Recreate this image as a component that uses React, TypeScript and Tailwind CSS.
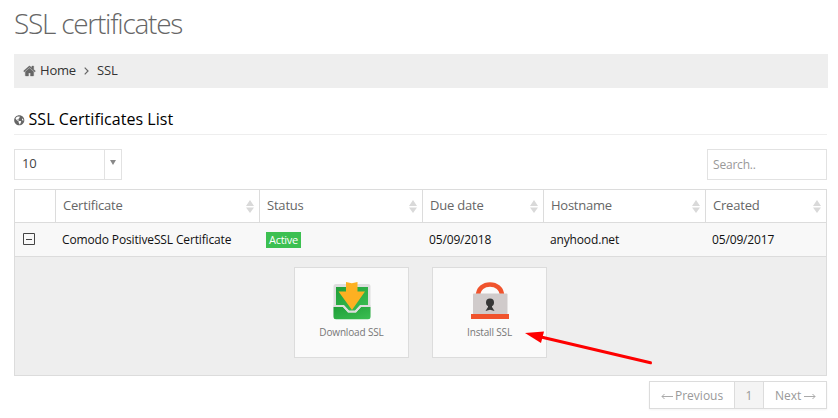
import React from "react";
import { FaGlobeAmericas } from "react-icons/fa";

const HomeIcon = () => (
  <svg className="h-[14px] w-[13px] shrink-0" viewBox="0 0 1792 1792" fill="#666" stroke="#666" strokeWidth="40" preserveAspectRatio="none">
    <path d="M1472 992v480q0 26-19 45t-45 19h-384v-384h-256v384h-384q-26 0-45-19t-19-45v-480q0-1 .5-3t.5-3l575-474 575 474q1 2 1 6zm223-69l-62 74q-8 9-21 11h-3q-13 0-21-7l-692-577-692 577q-12 8-24 7-13-2-21-11l-62-74q-8-10-7-23.5t11-21.5l719-599q32-26 76-26t76 26l244 204v-195q0-14 9-23t23-9h192q14 0 23 9t9 23v408l219 182q10 8 11 21.5t-7 23.5z" />
  </svg>
);

const SortIcon = () => (
  <svg className="mt-px h-[13px] w-[8px] shrink-0" viewBox="0 0 8 13" fill="#d9d9d9">
    <path d="M4 0L8 6H0zM0 7.500H8L4 13z" />
  </svg>
);

const DownloadIcon = () => (
  <svg className="h-[39px] w-[38px]" viewBox="0 0 38 39">
    <defs>
      <linearGradient id="tray" x1="0" y1="0" x2="1" y2="1">
        <stop offset="0" stopColor="#1f9f38" />
        <stop offset="1" stopColor="#3cbf53" />
      </linearGradient>
    </defs>
    <rect x="0.500" y="2" width="37" height="34" rx="2.500" fill="#dedede" />
    <path d="M3 5h32v18h-7.500l-5.500 6h-6l-5.500-6H3z" fill="url(#tray)" />
    <path d="M0.500 25H10l5 5.500h8l5-5.500h9.500v9.800a2.500 2.500 0 0 1-2.500 2.500H3a2.500 2.500 0 0 1-2.500-2.500z" fill="url(#tray)" />
    <path d="M0.500 24H10.500l5 5.500h7l5-5.500h10" fill="none" stroke="#dedede" strokeWidth="2" />
    <path d="M13 0l5.800 1.200L24.500 0v9.500H32L19 28 5.500 9.500H13z" fill="#fdb022" />
  </svg>
);

const LockIcon = () => (
  <svg className="h-[39px] w-[38px]" viewBox="0 0 38 39">
    <path d="M7 14C7 -1.500 31 -1.500 31 14" fill="none" stroke="#f0532d" strokeWidth="4.500" />
    <rect x="2" y="11.500" width="34.500" height="21" rx="1" fill="#d0cbcb" />
    <rect y="32" width="38" height="5" fill="#f0532d" />
    <circle cx="19" cy="20.500" r="4" fill="#373737" />
    <path d="M17 22h4v3l2.500 4-4.500-1.200-4.500 1.200L17 25z" fill="#373737" />
  </svg>
);

const columns = [
  { label: "Certificate", width: "w-[204px]", spacing: "tracking-[-0.2px]" },
  { label: "Status", width: "w-[163px]", spacing: "tracking-[-0.2px]" },
  { label: "Due date", width: "w-[121px]", spacing: "tracking-[-0.2px]" },
  { label: "Hostname", width: "w-[162px]", spacing: "tracking-[-0.25px]" },
  { label: "Created", width: "w-[121px]", spacing: "tracking-[-0.2px]" },
];

function Tile({ label, children }: { label: string; children: React.ReactNode }) {
  return (
    <button className="flex h-[91px] w-[115px] flex-col items-center border border-[#dcdcdc] bg-[#fafafa] pt-[14px]">
      {children}
      <span className="mt-[4px] text-[10px] leading-[14px] tracking-[-0.15px] whitespace-nowrap text-[#777]">{label}</span>
    </button>
  );
}

const ArrowLeft = () => (
  <svg className="mt-[2px] h-[7px] w-[12px]" viewBox="0 0 12 7" fill="none" stroke="#aaa"><path d="M12 3.500H1M3.500 1L1 3.500 3.500 6" /></svg>
);

const ArrowRight = () => (
  <svg className="mt-[2px] h-[7px] w-[12px]" viewBox="0 0 12 7" fill="none" stroke="#aaa"><path d="M0 3.500H11M8.500 1L11 3.500 8.500 6" /></svg>
);

export default function App() {
  return (
    <div className="relative h-[418px] w-[838px] overflow-hidden bg-white pl-[14px] font-['Open_Sans',sans-serif] text-[13px] text-[#333]">
      <h1 className="h-[54px] pt-[4px] text-[28px] leading-[38px] font-light tracking-[-1.250px] text-[#666]">SSL certificates</h1>
      <nav className="flex h-[34px] w-[814px] items-center bg-[#eee] pl-[9px]">
        <HomeIcon />
        <span className="ml-[4px] w-[36px] text-[13px] tracking-[-0.2px]">Home</span>
        <svg className="ml-[8px] h-[8px] w-[5px]" viewBox="0 0 5 8" fill="none" stroke="#666" strokeWidth="1.200"><path d="M0.700 0.700L4 4 0.700 7.300" /></svg>
        <span className="ml-[8px] tracking-[-0.1px]">SSL</span>
      </nav>
      <h2 className="mt-[18px] flex h-[29px] w-[813px] border-b border-[#eee] text-[16px] leading-[27px] tracking-[0.06px] text-black">
        <FaGlobeAmericas className="mt-[9px] mr-[4px] size-[10.500px] text-[#666]" />
        SSL Certificates List
      </h2>
      <div className="mt-[14px] flex h-[31px] w-[813px] justify-between">
        <div className="flex w-[108px] border border-[#e2e2e2] text-[#444]">
          <span className="flex-1 pl-[7px] leading-[27px] tracking-[-0.2px]">10</span>
          <span className="flex w-[17px] justify-center border-l border-[#e2e2e2] pt-[10px]">
            <svg className="h-[5px] w-[6px]" viewBox="0 0 6 5" fill="#888"><path d="M0 0h6L3 5z" /></svg>
          </span>
        </div>
        <div className="w-[120px] border border-[#e2e2e2] pl-[5px] text-[12px] leading-[29px] tracking-[-0.2px] text-[#999]">Search..</div>
      </div>
      <section className="mt-[9px] h-[187px] w-[813px] border border-[#dcdcdc] bg-[#eee]">
        <div className="flex h-[33px] border-b border-[#dcdcdc] bg-white">
          <div className="w-[40px]" />
          {columns.map((c) => (
            <div key={c.label} className={`${c.width} ${c.spacing} flex items-center justify-between border-l border-[#dcdcdc] pr-[5px] pl-[7px] text-[13px] text-[#666]`}>
              <span className="whitespace-nowrap">{c.label}</span>
              <SortIcon />
            </div>
          ))}
        </div>
        <div className="flex h-[34px] items-center border-b border-[#dcdcdc] bg-[#f8f8f8] text-[12px] whitespace-nowrap text-[#111]">
          <div className="w-[47px] pl-[8px]">
            <svg className="-mt-px block size-[12px]" viewBox="0 0 12 12" fill="none" stroke="#444"><path d="M.5.5h11v11H.5zM3 6.500h6" /></svg>
          </div>
          <div className="w-[204px] tracking-[-0.14px]">Comodo PositiveSSL Certificate</div>
          <div className="w-[163px]">
            <span className="block h-[16px] w-[35px] bg-[#3cc051] text-center text-[11px] leading-[16px] tracking-[-0.3px] text-white">Active</span>
          </div>
          <div className="w-[121px] tracking-[-0.15px]">05/09/2018</div>
          <div className="w-[162px] tracking-[-0.15px]">anyhood.net</div>
          <div className="tracking-[-0.15px]">05/09/2017</div>
        </div>
        <div className="flex gap-[23px] pt-[10px] pl-[279px]">
          <Tile label="Download SSL"><DownloadIcon /></Tile>
          <Tile label="Install SSL"><LockIcon /></Tile>
        </div>
      </section>
      <div className="mt-[5px] ml-[635px] flex h-[28px] w-[178px] border border-[#dcdcdc] text-[12px] leading-[28px] whitespace-nowrap text-[#999] shadow-[0_1px_2px_rgba(0,0,0,0.05)]">
        <span className="flex w-[84px] items-center gap-[2px] pl-[11px]"><ArrowLeft /><span className="pt-px">Previous</span></span>
        <span className="w-[30px] border-x border-[#dcdcdc] bg-[#f4f4f4] text-center">1</span>
        <span className="flex items-center gap-[3px] pl-[11px]"><span className="pt-px">Next</span><ArrowRight /></span>
      </div>
      <svg className="pointer-events-none absolute top-[325px] left-[520px] h-[45px] w-[140px]" viewBox="0 0 140 45">
        <path d="M20 11.800L130.500 37.800" stroke="#fe0000" strokeWidth="3" strokeLinecap="round" />
        <path d="M5 8L24 6.500 21 18z" fill="#fe0000" />
      </svg>
    </div>
  );
}
